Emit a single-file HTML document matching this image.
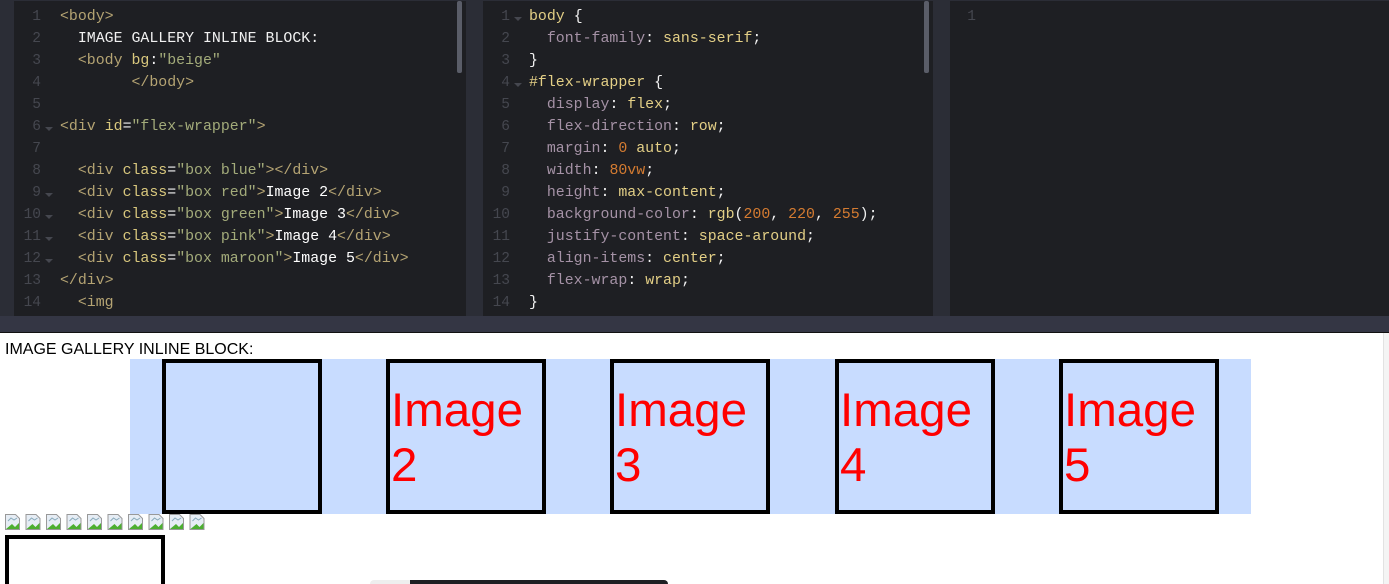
<!DOCTYPE html>
<html><head><style>
*{margin:0;padding:0;box-sizing:border-box}
html,body{width:1389px;height:584px;overflow:hidden}
body{background:#fff;font-family:"Liberation Sans",sans-serif;position:relative}
#ed{position:absolute;left:0;top:0;width:1389px;height:333px;background:#2b2d36;border-bottom:1px solid #111}
#strip{position:absolute;left:0;top:316px;width:1389px;height:16px;background:#343644}
.p{position:absolute;top:1px;height:315px;background:#1e1f23;overflow:hidden}
.ln{position:absolute;left:0;top:5px;width:27px;text-align:right;color:#45474f;font:14.5px/22px "Liberation Mono",monospace}
.fd{position:absolute;left:31px;width:0;height:0;border-left:4px solid transparent;border-right:4px solid transparent;border-top:4px solid #45474f}
.code{position:absolute;left:46px;top:5px;font:14.9px/22px "Liberation Mono",monospace;white-space:pre;color:#fff}
.sb{position:absolute;top:0;width:5px;height:72px;background:#5a5d68;border-radius:2px}
.t{color:#b5a473}.a{color:#d8c77d}.s{color:#a3ab7a}.w{color:#f1f1f1}
.pr{color:#a592a6}.v{color:#e3cf86}.n{color:#d47b31}
.fw{position:absolute;left:130px;top:359px;width:1121px;height:155px;background:rgb(200,220,255)}
.bx{position:absolute;top:359px;width:160px;height:155px;border:4px solid #000;color:red;font-size:47.5px;line-height:55px;padding-top:20px;padding-left:1px}
</style></head><body>
<div id="ed">
<div class="p" style="left:14px;width:452px">
<div class="ln">1<br>2<br>3<br>4<br>5<br>6<br>7<br>8<br>9<br>10<br>11<br>12<br>13<br>14</div>
<div class="fd" style="top:126px"></div><div class="fd" style="top:192px"></div><div class="fd" style="top:214px"></div><div class="fd" style="top:236px"></div><div class="fd" style="top:258px"></div>
<div class="code"><span class="t">&lt;body&gt;</span>
  <span class="w">IMAGE GALLERY INLINE BLOCK:</span>
  <span class="t">&lt;body</span> <span class="a">bg</span><span class="w">:</span><span class="s">"beige"</span>
        <span class="t">&lt;/body&gt;</span>

<span class="t">&lt;div</span> <span class="a">id</span><span class="w">=</span><span class="s">"flex-wrapper"</span><span class="t">&gt;</span>

  <span class="t">&lt;div</span> <span class="a">class</span><span class="w">=</span><span class="s">"box blue"</span><span class="t">&gt;&lt;/div&gt;</span>
  <span class="t">&lt;div</span> <span class="a">class</span><span class="w">=</span><span class="s">"box red"</span><span class="t">&gt;</span>Image 2<span class="t">&lt;/div&gt;</span>
  <span class="t">&lt;div</span> <span class="a">class</span><span class="w">=</span><span class="s">"box green"</span><span class="t">&gt;</span>Image 3<span class="t">&lt;/div&gt;</span>
  <span class="t">&lt;div</span> <span class="a">class</span><span class="w">=</span><span class="s">"box pink"</span><span class="t">&gt;</span>Image 4<span class="t">&lt;/div&gt;</span>
  <span class="t">&lt;div</span> <span class="a">class</span><span class="w">=</span><span class="s">"box maroon"</span><span class="t">&gt;</span>Image 5<span class="t">&lt;/div&gt;</span>
<span class="t">&lt;/div&gt;</span>
  <span class="t">&lt;img</span></div>
<div class="sb" style="left:443px"></div>
</div>
<div class="p" style="left:483px;width:450px">
<div class="ln">1<br>2<br>3<br>4<br>5<br>6<br>7<br>8<br>9<br>10<br>11<br>12<br>13<br>14</div>
<div class="fd" style="top:16px"></div><div class="fd" style="top:82px"></div>
<div class="code"><span class="v">body</span> <span class="w">{</span>
  <span class="pr">font-family</span><span class="w">:</span> <span class="v">sans-serif</span><span class="w">;</span>
<span class="w">}</span>
<span class="v">#flex-wrapper</span> <span class="w">{</span>
  <span class="pr">display</span><span class="w">:</span> <span class="v">flex</span><span class="w">;</span>
  <span class="pr">flex-direction</span><span class="w">:</span> <span class="v">row</span><span class="w">;</span>
  <span class="pr">margin</span><span class="w">:</span> <span class="n">0</span> <span class="v">auto</span><span class="w">;</span>
  <span class="pr">width</span><span class="w">:</span> <span class="n">80vw</span><span class="w">;</span>
  <span class="pr">height</span><span class="w">:</span> <span class="v">max-content</span><span class="w">;</span>
  <span class="pr">background-color</span><span class="w">:</span> <span class="v">rgb</span><span class="w">(</span><span class="n">200</span><span class="w">, </span><span class="n">220</span><span class="w">, </span><span class="n">255</span><span class="w">);</span>
  <span class="pr">justify-content</span><span class="w">:</span> <span class="v">space-around</span><span class="w">;</span>
  <span class="pr">align-items</span><span class="w">:</span> <span class="v">center</span><span class="w">;</span>
  <span class="pr">flex-wrap</span><span class="w">:</span> <span class="v">wrap</span><span class="w">;</span>
<span class="w">}</span></div>
<div class="sb" style="left:441px"></div>
</div>
<div class="p" style="left:950px;width:439px">
<div class="ln" style="width:26px">1</div>
</div>
<div id="strip"></div>
</div>
<div style="position:absolute;left:5px;top:341px;font-size:16px;line-height:18px">IMAGE GALLERY INLINE BLOCK:</div>
<div class="fw"></div>
<div class="bx" style="left:162px"></div>
<div class="bx" style="left:386px">Image<br>2</div>
<div class="bx" style="left:610px">Image<br>3</div>
<div class="bx" style="left:835px">Image<br>4</div>
<div class="bx" style="left:1059px">Image<br>5</div>
<svg style="position:absolute;left:0;top:514px" width="220" height="18">
<defs><g id="ic"><path d="M0.5 0.5h10l4 4v11h-14z" fill="#e6edf5" stroke="#999"/><path d="M1 15l6-5 3 3 4-4v6z" fill="#4caf30"/><path d="M3 7l3-3 3 2 3-2" stroke="#8ab" fill="none"/></g></defs>
<use href="#ic" x="5"/><use href="#ic" x="25.5"/><use href="#ic" x="46"/><use href="#ic" x="66.5"/><use href="#ic" x="87"/><use href="#ic" x="107.5"/><use href="#ic" x="128"/><use href="#ic" x="148.5"/><use href="#ic" x="169"/><use href="#ic" x="189.5"/>
</svg>
<div style="position:absolute;left:5px;top:535px;width:160px;height:49px;border:4px solid #000;border-bottom:none"></div>
<div style="position:absolute;left:370px;top:580px;width:298px;height:4px;background:#1e1f23;border-radius:4px 4px 0 0;border-left:40px solid #eee"></div>
<div style="position:absolute;left:1383px;top:333px;width:6px;height:251px;background:#f4f4f4;border-left:1px solid #e2e2e2"></div>
</body></html>
